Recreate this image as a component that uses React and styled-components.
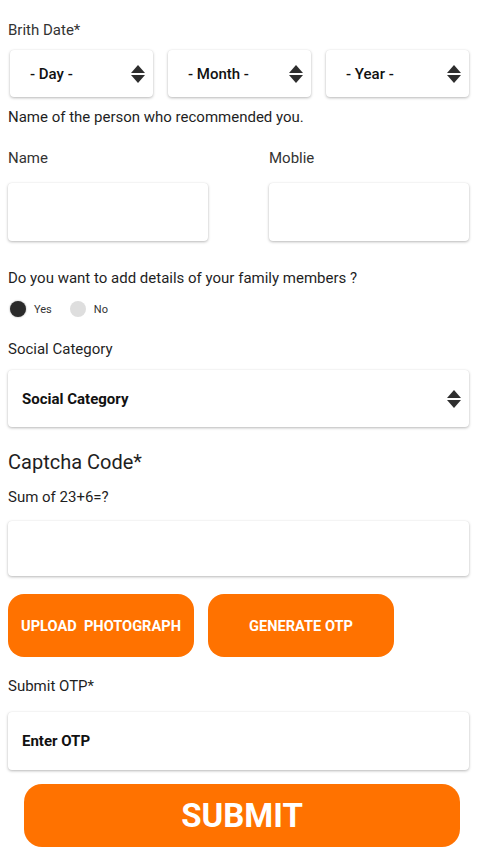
import React from "react";
import styled, { createGlobalStyle } from "styled-components";

const GlobalStyle = createGlobalStyle`
  html, body {
    margin: 0;
    padding: 0;
    background: #fff;
    font-family: Roboto, "Liberation Sans", sans-serif;
  }
`;

const ORANGE = "#ff7200";

const Page = styled.div`
  padding: 0 11px 6px 8px;
  display: flex;
  flex-direction: column;
`;

const Label = styled.div`
  margin-top: ${(p) => p.$mt || 0}px;
  font-size: ${(p) => (p.$big ? 20 : 15)}px;
  line-height: ${(p) => (p.$big ? 24 : 20)}px;
  color: ${(p) => (p.$dark ? "#1f1f1f" : "#333")};
`;

const SelectRow = styled.div`
  margin: 10px 0 0 2px;
  display: grid;
  grid-template-columns: repeat(3, 1fr);
  gap: 15px;
`;

const Box = styled.div`
  margin-top: ${(p) => p.$mt || 0}px;
  height: ${(p) => p.$h || 57}px;
  background: #fff;
  border-radius: 4px;
  box-shadow: 0 1px 3px rgba(0, 0, 0, 0.28), 0 0 1px rgba(0, 0, 0, 0.08);
  display: flex;
  align-items: center;
  justify-content: space-between;
  padding: 0 ${(p) => p.$pr || 8}px 0 ${(p) => p.$pl || 14}px;
  box-sizing: border-box;
  font-size: 15px;
  font-weight: ${(p) => (p.$bold ? 700 : 500)};
  color: #111;
`;

const TwoCols = styled.div`
  margin-top: ${(p) => p.$mt || 0}px;
  display: grid;
  grid-template-columns: 200px 200px;
  justify-content: space-between;
`;

const RadioRow = styled.div`
  margin-top: 13px;
  display: flex;
  align-items: center;
  height: 16px;
  padding-left: 2px;
`;

const Dot = styled.span`
  width: 16px;
  height: 16px;
  border-radius: 50%;
  background: ${(p) => (p.$on ? "#2a2a2a" : "#dedede")};
  box-shadow: ${(p) => (p.$on ? "0 0 2px rgba(0,0,0,0.4)" : "none")};
`;

const RadioText = styled.span`
  font-size: 11px;
  color: #333;
  margin: 0 ${(p) => p.$mr || 0}px 0 8px;
`;

const ButtonRow = styled.div`
  margin-top: 18px;
  display: flex;
  gap: 14px;
`;

const OrangeButton = styled.button`
  width: 186px;
  height: 63px;
  border: none;
  border-radius: 16px;
  background: ${ORANGE};
  color: #fff;
  font-family: Roboto, "Liberation Sans", sans-serif;
  font-size: 14.6px;
  font-weight: 700;
  padding: 0;
  white-space: pre;
`;

const SubmitButton = styled.button`
  margin: 14px 9px 0 16px;
  height: 63px;
  border: none;
  border-radius: 18px;
  background: ${ORANGE};
  color: #fff;
  font-family: Roboto, "Liberation Sans", sans-serif;
  font-size: 33px;
  font-weight: 700;
`;

const Arrows = () => (
  <svg width="14" height="20" viewBox="0 0 14 20">
    <path d="M0 9 L7 1 L14 9 Z" fill="#2e2e2e" />
    <path d="M0 11 L14 11 L7 19 Z" fill="#2e2e2e" />
  </svg>
);

const Select = ({ children, ...props }) => (
  <Box {...props}>
    <span>{children}</span>
    <Arrows />
  </Box>
);

export default function App() {
  return (
    <>
      <GlobalStyle />
      <Page>
        <Label $mt={20}>Brith Date*</Label>
        <SelectRow>
          <Select $h={47} $pl={20}>- Day -</Select>
          <Select $h={47} $pl={20}>- Month -</Select>
          <Select $h={47} $pl={20}>- Year -</Select>
        </SelectRow>
        <Label $mt={10} $dark>
          Name of the person who recommended you.
        </Label>
        <TwoCols $mt={21}>
          <Label>Name</Label>
          <Label>Moblie</Label>
        </TwoCols>
        <TwoCols $mt={15}>
          <Box $h={58} />
          <Box $h={58} />
        </TwoCols>
        <Label $mt={27} $dark>
          Do you want to add details of your family members ?
        </Label>
        <RadioRow>
          <Dot $on />
          <RadioText $mr={18}>Yes</RadioText>
          <Dot />
          <RadioText>No</RadioText>
        </RadioRow>
        <Label $mt={22} $dark>Social Category</Label>
        <Select $mt={11} $h={57} $bold>
          Social Category
        </Select>
        <Label $mt={23} $big $dark>Captcha Code*</Label>
        <Label $mt={13} $dark>Sum of 23+6=?</Label>
        <Box $mt={14} $h={55} />
        <ButtonRow>
          <OrangeButton>{"UPLOAD  PHOTOGRAPH"}</OrangeButton>
          <OrangeButton>GENERATE OTP</OrangeButton>
        </ButtonRow>
        <Label $mt={19} $dark>Submit OTP*</Label>
        <Box $mt={16} $h={58} $bold>
          Enter OTP
        </Box>
        <SubmitButton>SUBMIT</SubmitButton>
      </Page>
    </>
  );
}
